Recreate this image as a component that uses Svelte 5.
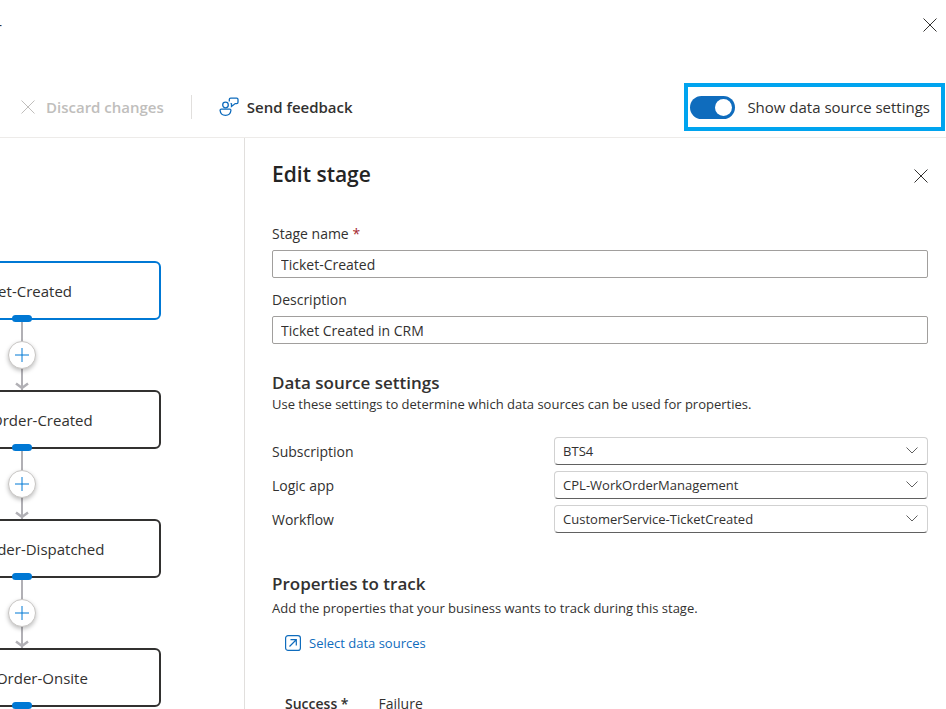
<script>
  let showSettings = $state(true);
  let stageName = $state('Ticket-Created');
  let description = $state('Ticket Created in CRM');

  const stages = ['Ticket-Created', 'Work Order-Created', 'Work Order-Dispatched', 'Work Order-Onsite'];

  const sources = [
    { id: 'subscription', label: 'Subscription', value: 'BTS4' },
    { id: 'logic-app', label: 'Logic app', value: 'CPL-WorkOrderManagement' },
    { id: 'workflow', label: 'Workflow', value: 'CustomerService-TicketCreated' }
  ];
</script>

{#snippet cross()}
  <svg class="cross" viewBox="0 0 14 14" width="14" height="14" aria-hidden="true">
    <path d="M0.5 0.5L13.5 13.5M13.5 0.5L0.5 13.5" />
  </svg>
{/snippet}

<div class="page">
  <header class="titlebar">
    <span class="title">-</span>
    <button class="icon-button" aria-label="Close">{@render cross()}</button>
  </header>

  <div class="toolbar">
    <button class="command" disabled>
      {@render cross()}
      Discard changes
    </button>
    <span class="divider"></span>
    <button class="command feedback">
      <svg viewBox="0 0 20 20" width="20" height="20" aria-hidden="true">
        <circle cx="6.5" cy="8" r="2.8" />
        <path d="M2.2 12.2H10.8C11.6 12.2 12 12.8 11.9 13.5C11.6 16.5 9.5 18.3 6.5 18.3S1.4 16.5 1.1 13.5C1 12.8 1.4 12.2 2.2 12.2Z" />
        <path d="M10.3 4.5V2.6C10.3 1.8 10.9 1.2 11.7 1.2H17.6C18.4 1.2 19 1.8 19 2.6V5.2C19 6 18.4 6.6 17.6 6.6H16.2L12.5 9.5V6.8L11.6 6.4" />
      </svg>
      Send feedback
    </button>
    <label class="toggle">
      <input type="checkbox" role="switch" bind:checked={showSettings} />
      Show data source settings
    </label>
  </div>

  <main>
    <section class="canvas">
      <div class="flow">
        {#each stages as stage, i}
          <div class="stage" class:selected={i === 0}>
            {stage}
            <span class="handle"></span>
          </div>
          <div class="connector">
            <button class="add" aria-label="Add stage">
              <svg viewBox="0 0 14 14" width="14" height="14" aria-hidden="true">
                <path d="M7 0V14M0 7H14" />
              </svg>
            </button>
            <svg class="arrow" viewBox="0 0 14 8" width="14" height="8" aria-hidden="true">
              <path d="M1 1.5L7 6L13 1.5" />
            </svg>
          </div>
        {/each}
      </div>
    </section>

    <section class="panel">
      <div class="panel-head">
        <h1>Edit stage</h1>
        <button class="icon-button" aria-label="Close panel">{@render cross()}</button>
      </div>

      <label class="field" for="stage-name">Stage name <span class="required">*</span></label>
      <input class="text" id="stage-name" type="text" bind:value={stageName} />
      <label class="field" for="description">Description</label>
      <input class="text" id="description" type="text" bind:value={description} />

      {#if showSettings}
        <h2>Data source settings</h2>
        <p>Use these settings to determine which data sources can be used for properties.</p>
        <div class="sources">
          {#each sources as source}
            <div class="row">
              <label for={source.id}>{source.label}</label>
              <div class="select">
                <select id={source.id}>
                  <option>{source.value}</option>
                </select>
                <svg viewBox="0 0 12 7" width="12" height="7" aria-hidden="true">
                  <path d="M0.5 0.5L6 6L11.5 0.5" />
                </svg>
              </div>
            </div>
          {/each}
        </div>
      {/if}

      <h2 class="properties">Properties to track</h2>
      <p>Add the properties that your business wants to track during this stage.</p>
      <button class="link">
        <svg viewBox="0 0 16 16" width="16" height="16" aria-hidden="true">
          <rect x="0.6" y="0.6" width="14.8" height="14.8" rx="2.5" />
          <path d="M4.5 11.5L11 5M5.5 4.7H11.3V10.5" />
        </svg>
        Select data sources
      </button>

      <div class="tabs" role="tablist">
        <button role="tab" aria-selected="true">Success *</button>
        <button role="tab" aria-selected="false">Failure</button>
      </div>
    </section>
  </main>
</div>

<style>
  :global(body) {
    margin: 0;
  }

  .page {
    display: flex;
    flex-direction: column;
    height: 100vh;
    overflow: hidden;
    background: #ffffff;
    color: #323130;
    font-family: 'Segoe UI', 'Open Sans', sans-serif;
    font-size: 14px;
    line-height: 20px;
  }

  button,
  input,
  select {
    box-sizing: border-box;
    margin: 0;
    color: inherit;
    font: inherit;
  }

  button {
    padding: 0;
    border: 0;
    background: none;
  }

  svg {
    display: block;
    flex: none;
    fill: none;
    stroke: currentColor;
  }

  .icon-button {
    padding: 3px;
  }

  .titlebar {
    display: flex;
    align-items: center;
    justify-content: space-between;
    height: 50px;
    padding-right: 6px;
  }

  .title {
    width: 2px;
    overflow: hidden;
    direction: rtl;
  }

  .toolbar {
    display: flex;
    align-items: center;
    height: 60px;
    padding: 27px 1px 0 21px;
    border-bottom: 1px solid #edebe9;
    box-sizing: content-box;
    font-size: 15px;
  }

  .command {
    display: flex;
    align-items: center;
    gap: 11px;
    font-weight: 600;
  }

  .command:disabled {
    color: #c0bebc;
  }

  .command.feedback {
    gap: 8px;
  }

  .feedback svg {
    stroke: #0f6cbd;
    stroke-width: 1.3;
  }

  .divider {
    width: 1px;
    height: 24px;
    margin: 0 27px;
    background: #e1dfdd;
  }

  .toggle {
    display: flex;
    align-items: center;
    gap: 12px;
    height: 40px;
    margin-left: auto;
    padding: 0 11px 0 2px;
    border: 4px solid #00a4ef;
  }

  .toggle input {
    appearance: none;
    width: 45px;
    height: 23px;
    padding: 3px;
    border-radius: 12px;
    background: #0f6cbd;
  }

  .toggle input::before {
    content: '';
    display: block;
    width: 17px;
    height: 17px;
    border-radius: 50%;
    background: #ffffff;
  }

  .toggle input:not(:checked) {
    background: #8a8886;
  }

  .toggle input:checked::before {
    margin-left: auto;
  }

  main {
    display: flex;
    flex: 1;
    min-height: 0;
  }

  .canvas {
    flex: none;
    width: 244px;
    overflow: hidden;
  }

  /* the flow is scrolled partly out of the canvas */
  .flow {
    width: 279px;
    margin: 123px 0 0 -118px;
  }

  .stage {
    display: flex;
    align-items: center;
    justify-content: center;
    position: relative;
    box-sizing: border-box;
    height: 59px;
    border: 2px solid #323130;
    border-radius: 6px;
    font-size: 15px;
  }

  .stage.selected {
    border-color: #0078d4;
  }

  .handle {
    position: absolute;
    bottom: -4px;
    left: 50%;
    width: 20px;
    height: 7px;
    margin-left: -10px;
    border-radius: 4px;
    background: #0078d4;
  }

  .connector {
    display: flex;
    flex-direction: column;
    align-items: center;
    justify-content: space-between;
    box-sizing: border-box;
    height: 70px;
    padding-top: 21px;
    background: linear-gradient(#b1b0b5, #b1b0b5) center / 2px 100% no-repeat;
  }

  .add {
    display: grid;
    place-items: center;
    width: 28px;
    height: 28px;
    border: 1px solid #c8c6c4;
    border-radius: 50%;
    background: #ffffff;
    box-shadow: 0 2px 4px rgba(0, 0, 0, 0.25);
    color: #0078d4;
  }

  .arrow {
    stroke: #b1b0b5;
    stroke-width: 2.5;
  }

  .panel {
    flex: 1;
    min-width: 0;
    padding: 20px 18px 0 27px;
    border-left: 1px solid #e1dfdd;
    overflow: hidden;
  }

  .panel-head {
    display: flex;
    align-items: flex-end;
    justify-content: space-between;
    margin: 0 -3px 34px 0;
  }

  .panel-head .icon-button {
    padding-bottom: 7px;
  }

  h1 {
    margin: 0;
    font-size: 21px;
    font-weight: 600;
    line-height: 32px;
    color: #242424;
  }

  .field {
    display: block;
    margin-bottom: 6px;
  }

  .required {
    color: #a4262c;
  }

  .text {
    display: block;
    width: 100%;
    height: 28px;
    margin-bottom: 12px;
    padding: 0 8px;
    border: 1px solid #a19f9d;
    border-radius: 2px;
  }

  h2 {
    margin: 28px 0 0;
    font-size: 17px;
    font-weight: 600;
    line-height: 22px;
  }

  h2.properties {
    margin-bottom: 3px;
  }

  p {
    margin: 0;
    font-size: 13px;
  }

  .sources {
    display: flex;
    flex-direction: column;
    gap: 6px;
    margin: 23px 0 40px;
  }

  .row {
    display: flex;
    align-items: center;
    justify-content: space-between;
  }

  .row label {
    padding-top: 2px;
  }

  .select {
    position: relative;
    width: 57%;
  }

  .select select {
    display: block;
    appearance: none;
    width: 100%;
    height: 28px;
    padding: 0 30px 1px 8px;
    border: 1px solid #d1d1d1;
    border-bottom-color: #616161;
    border-radius: 4px;
    background: #ffffff;
    font-size: 13px;
  }

  .select svg {
    position: absolute;
    top: 10px;
    right: 10px;
    pointer-events: none;
    stroke: #616161;
  }

  .link {
    display: flex;
    align-items: center;
    gap: 8px;
    margin: 15px 0 41px 13px;
    color: #0f6cbd;
    font-size: 13px;
  }

  .link svg {
    stroke-width: 1.2;
  }

  .tabs {
    display: flex;
    gap: 30px;
    margin-left: 13px;
  }

  .tabs [aria-selected='true'] {
    font-weight: 600;
  }
</style>
